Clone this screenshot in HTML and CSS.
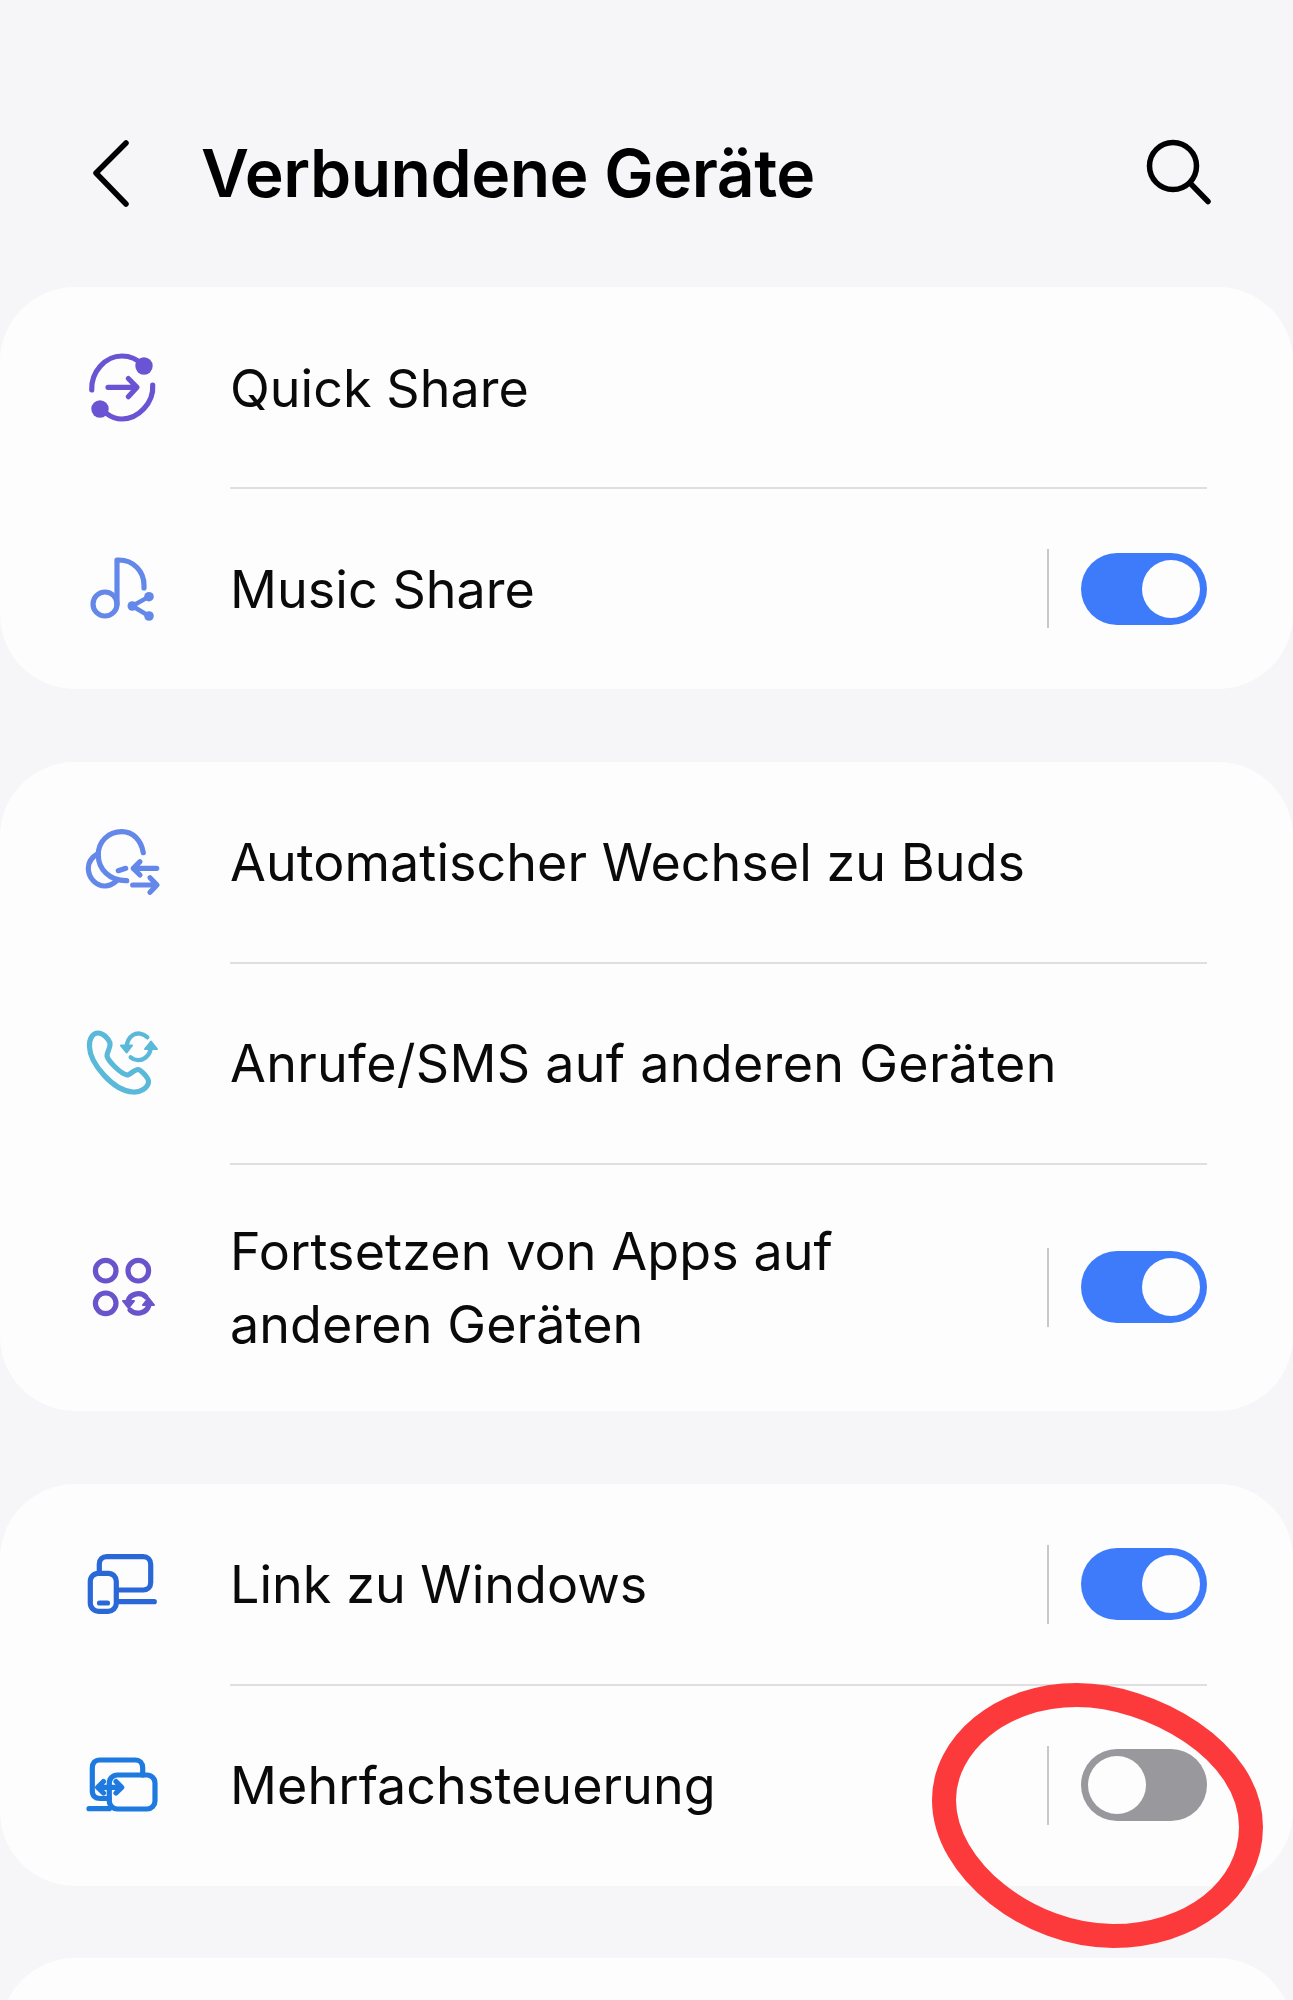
FILE: index.html
```html
<!DOCTYPE html>
<html lang="de">
<head>
<meta charset="utf-8">
<title>Verbundene Geräte</title>
<link rel="stylesheet" href="styles.css">
</head>
<body>
<div class="page">
  <header class="header">
    <svg class="back" viewBox="0 0 50 80"><path d="M40 10 10 40 40 71"/></svg>
    <h1 class="title">Verbundene Geräte</h1>
    <svg class="search" viewBox="0 0 70 70"><circle cx="28" cy="28" r="23.5"/><path d="M45 45 63 63.500"/></svg>
  </header>

  <section class="card">
    <div class="row">
      <svg class="icon ic-quick" viewBox="0 0 80 80"><path d="M8.700 42C8 24 22 8 39 8c8 0 15 3 21 9"/><path d="M69.700 37C71 55 55 71 39 71c-6 0-11-2-15.500-5.500"/><path d="M25 39.300H53M45.300 30.500 54 39.300 45.300 48.700"/><circle class="solid" cx="61" cy="18" r="8.700"/><circle class="solid" cx="17" cy="61" r="8.700"/></svg>
      <div class="label">Quick Share</div>
    </div>
    <div class="row">
      <svg class="icon ic-music" viewBox="0 0 80 80"><circle cx="22" cy="55" r="12"/><path d="M34 55V11h2c14 0 25 11 25 25v3"/><path class="thin" d="M66 47.700 49.300 57 66 67"/><circle class="solid" cx="66" cy="47.700" r="4.800"/><circle class="solid" cx="49.300" cy="57" r="4.800"/><circle class="solid" cx="66" cy="67" r="4.800"/></svg>
      <div class="label">Music Share</div>
      <span class="divider"></span><span class="toggle on"><span class="thumb"></span></span>
    </div>
  </section>

  <section class="card">
    <div class="row">
      <svg class="icon ic-auto" viewBox="0 0 80 80"><path d="M60.300 30.700C58 18 50 9.700 38.700 9.700 25 9.700 15 20 15.300 33c0 14 11 26 28.400 25.700"/><path d="M15.300 31.300C9 35 5.300 40 5.300 46.300 5.300 56 13 64 22 64c4 0 8-2 11.700-5.300"/><path d="M35.300 48.700 42.700 46.300M73.700 46.300H50.300M57 39.700 50.300 46.300 57 53M49.700 63H73.700M67 55.700 74 63 67 70.300"/></svg>
      <div class="label">Automatischer Wechsel zu Buds</div>
    </div>
    <div class="row">
      <svg class="icon ic-phone" viewBox="0 0 80 80"><path d="M15 10C10 10 6 15 6.500 24 7 40 30 68 50 69c7 .5 15-4 15.500-10 .5-4-7.500-12-10.500-12.500-4 0-8 5.500-11 5.500-6-1-19-14-20-19 0-5 4-8 3-13-1-4-7-10-12-10Z"/><path class="thin" d="M64.300 14.300C60 10 54 9.500 50 12c-4 2.500-6 7-6.300 12"/><path class="thin" d="M47.700 34.300C52 38 58 38 62 35c4-3 6-7 5.700-12"/><path class="solid" d="M38 22.500H49L43.700 29.500ZM62 26H74L68 18.500Z"/></svg>
      <div class="label wide">Anrufe/SMS auf anderen Geräten</div>
    </div>
    <div class="row tall">
      <svg class="icon ic-apps" viewBox="0 0 80 80"><circle cx="22.700" cy="23.700" r="10.300"/><circle cx="55.300" cy="23.700" r="10.300"/><circle cx="22.700" cy="56.300" r="10.300"/><path d="M45 54C47 47 57 44 63 50"/><path d="M66 58C64 66 53 69 47 63"/><path class="solid" d="M40 54H51L45.500 61ZM60 58H71L65.500 51Z"/></svg>
      <div class="label two-line">Fortsetzen von Apps auf<br>anderen Geräten</div>
      <span class="divider"></span><span class="toggle on"><span class="thumb"></span></span>
    </div>
  </section>

  <section class="card">
    <div class="row">
      <svg class="icon ic-link" viewBox="0 0 80 80"><path d="M16.300 27.500V20c0-4.500 3-7.300 7.500-7.300h36.400c4.500 0 7.500 3 7.500 7.500V38.500c0 4.500-3 7.500-7.500 7.500H35.300"/><rect x="7.300" y="29.300" width="26" height="38" rx="8"/><path d="M35.300 57.700H71.300M16.500 59H24.500"/></svg>
      <div class="label">Link zu Windows</div>
      <span class="divider"></span><span class="toggle on"><span class="thumb"></span></span>
    </div>
    <div class="row">
      <svg class="icon ic-multi" viewBox="0 0 80 80"><path d="M59.700 30V23c0-5-3-8-7.500-8H17c-5 0-7.700 3-7.700 8V46c0 5 3 7.500 7.700 7.500H26.300"/><rect x="26.300" y="30" width="45.700" height="34" rx="8"/><path d="M6 63.700H26.300M15 42.300H38.500M20.500 36.500 14.700 42.300 20.500 48M33 36.500 38.700 42.300 33 48"/></svg>
      <div class="label">Mehrfachsteuerung</div>
      <span class="divider"></span><span class="toggle"><span class="thumb"></span></span>
    </div>
  </section>

  <section class="card card-next"></section>

  <svg class="circle" viewBox="0 0 340 270"><path d="M137 12C210 12 311 67 311 144 311 207 250 253 173 253 90 253 4 187 4 117 4 62 60 12 137 12Z"/></svg>
</div>
</body>
</html>
```
FILE: styles.css
```css
* { box-sizing: border-box; }
html, body { margin: 0; padding: 0; }
body {
  background: #f6f6f8;
  font-family: Inter, "Noto Sans", sans-serif;
  color: #0a0a0a;
}
.page {
  position: relative;
  width: 1293px;
  height: 2000px;
  overflow: hidden;
}
.header {
  display: flex;
  align-items: center;
  height: 287px;
  padding: 59px 78px 0 86px;
}
.back {
  width: 50px;
  height: 80px;
  flex: none;
  fill: none;
  stroke: #000;
  stroke-width: 5.500;
  stroke-linecap: round;
  stroke-linejoin: round;
}
.title {
  flex: 1;
  margin: 0 0 0 65px;
  font-size: 66px;
  font-weight: 600;
  letter-spacing: -0.5px;
  color: #000;
}
.search {
  width: 70px;
  height: 70px;
  flex: none;
  fill: none;
  stroke: #000;
  stroke-width: 5.500;
  stroke-linecap: round;
}
.card {
  background: #fdfdfe;
  border-radius: 75px;
  margin-bottom: 72.750px;
  padding: 0 86px 0 83px;
}
.card-next { height: 201px; }
.row {
  display: flex;
  align-items: center;
  height: 201px;
  position: relative;
}
.row.tall { height: 247px; }
.row + .row::before {
  content: "";
  position: absolute;
  top: -1px;
  left: 147px;
  right: 0;
  height: 2px;
  background: #dfdfe2;
}
.icon {
  width: 80px;
  height: 80px;
  flex: none;
  fill: none;
  stroke: currentColor;
  stroke-width: 5.200;
  stroke-linecap: round;
  stroke-linejoin: round;
}
.icon .solid { fill: currentColor; stroke: none; }
.icon path.solid { stroke: currentColor; stroke-width: 2; }
.icon .thin { stroke-width: 4.400; }
.ic-quick { color: #6a54d4; }
.ic-music { color: #6488ea; }
.ic-auto { color: #6488ea; }
.ic-phone { color: #5ab9d8; }
.ic-apps { color: #6a54cc; }
.ic-link { color: #2a68d8; }
.ic-multi { color: #1f7ae0; }
.label {
  flex: 1;
  margin-left: 67px;
  padding-top: 2px;
  font-size: 52px;
  line-height: 72px;
  font-weight: 400;
  letter-spacing: 0.05px;
}
.label.wide { letter-spacing: 0.3px; }
.label.two-line { line-height: 73px; letter-spacing: 0.1px; }
.divider {
  width: 2px;
  height: 79px;
  background: #c8c8cb;
  flex: none;
  margin-right: 32px;
}
.toggle {
  width: 126px;
  height: 72px;
  flex: none;
  border-radius: 36px;
  background: #98989d;
  display: flex;
  align-items: center;
  padding: 0 7px;
}
.toggle.on {
  background: #3e7bfa;
  justify-content: flex-end;
}
.thumb {
  width: 58px;
  height: 58px;
  border-radius: 50%;
  background: #fdfdfe;
}
.circle {
  position: absolute;
  left: 940px;
  top: 1683px;
  width: 340px;
  height: 270px;
  overflow: visible;
  fill: none;
  stroke: #fc3a3c;
  stroke-width: 24px;
}
```
